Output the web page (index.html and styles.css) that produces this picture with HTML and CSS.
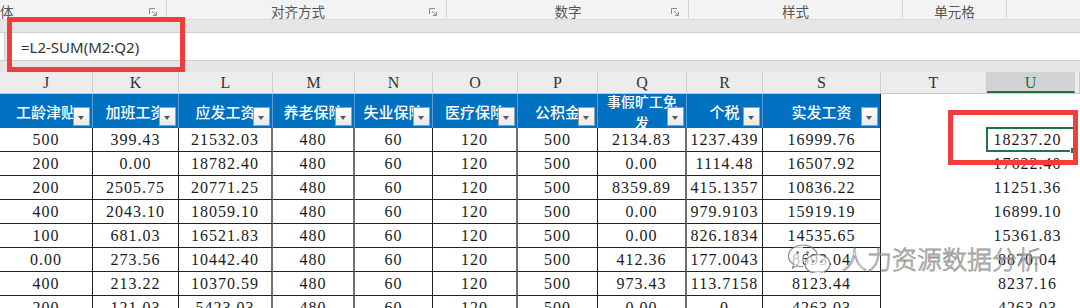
FILE: index.html
```html
<!DOCTYPE html>
<html>
<head>
<meta charset="utf-8">
<link rel="stylesheet" href="styles.css">
</head>
<body>
<div class="ribbon">
  <div class="grp g1"><span class="lbl">体</span><svg class="launch" width="8" height="8" viewBox="0 0 8 8"><path d="M0.5 6V0.5H6" fill="none" stroke="#8a8a8a"/><path d="M3 3L7 7M7.5 4V7.5H4" fill="none" stroke="#8a8a8a"/></svg></div>
  <div class="grp g2"><span class="lbl">对齐方式</span><svg class="launch" width="8" height="8" viewBox="0 0 8 8"><path d="M0.5 6V0.5H6" fill="none" stroke="#8a8a8a"/><path d="M3 3L7 7M7.5 4V7.5H4" fill="none" stroke="#8a8a8a"/></svg></div>
  <div class="grp g3"><span class="lbl">数字</span><svg class="launch" width="8" height="8" viewBox="0 0 8 8"><path d="M0.5 6V0.5H6" fill="none" stroke="#8a8a8a"/><path d="M3 3L7 7M7.5 4V7.5H4" fill="none" stroke="#8a8a8a"/></svg></div>
  <div class="grp g4"><span class="lbl">样式</span></div>
  <div class="grp g5"><span class="lbl">单元格</span></div>
  <div class="grp g6"></div>
</div>
<div class="band"></div>
<div class="fbar"><div class="namebox"></div><div class="fgap"></div><div class="ftext">=L2-SUM(M2:Q2)</div></div>
<div class="band2"></div>

<div class="sheet">
  <div class="row colhdr">
    <div>J</div><div>K</div><div>L</div><div>M</div><div>N</div><div>O</div><div>P</div><div>Q</div><div>R</div><div>S</div><div>T</div><div class="sel">U</div><div></div>
  </div>
  <div class="row thead">
    <div class="h"><span>工龄津贴</span><i class="dd"></i></div>
    <div class="h"><span>加班工资</span><i class="dd"></i></div>
    <div class="h"><span>应发工资</span><i class="dd"></i></div>
    <div class="h"><span>养老保险</span><i class="dd"></i></div>
    <div class="h"><span>失业保险</span><i class="dd"></i></div>
    <div class="h"><span>医疗保险</span><i class="dd"></i></div>
    <div class="h"><span>公积金</span><i class="dd"></i></div>
    <div class="h two"><span>事假旷工免<br>发</span><i class="dd"></i></div>
    <div class="h"><span>个税</span><i class="dd"></i></div>
    <div class="h"><span>实发工资</span><i class="dd"></i></div>
    <div class="e"></div><div class="e"></div><div class="e"></div>
  </div>
  <div class="row data"><div>500</div><div>399.43</div><div>21532.03</div><div>480</div><div>60</div><div>120</div><div>500</div><div>2134.83</div><div>1237.439</div><div>16999.76</div><div></div><div class="u">18237.20</div><div></div></div>
  <div class="row data"><div>200</div><div>0.00</div><div>18782.40</div><div>480</div><div>60</div><div>120</div><div>500</div><div>0.00</div><div>1114.48</div><div>16507.92</div><div></div><div class="u">17622.40</div><div></div></div>
  <div class="row data"><div>200</div><div>2505.75</div><div>20771.25</div><div>480</div><div>60</div><div>120</div><div>500</div><div>8359.89</div><div>415.1357</div><div>10836.22</div><div></div><div class="u">11251.36</div><div></div></div>
  <div class="row data"><div>400</div><div>2043.10</div><div>18059.10</div><div>480</div><div>60</div><div>120</div><div>500</div><div>0.00</div><div>979.9103</div><div>15919.19</div><div></div><div class="u">16899.10</div><div></div></div>
  <div class="row data"><div>100</div><div>681.03</div><div>16521.83</div><div>480</div><div>60</div><div>120</div><div>500</div><div>0.00</div><div>826.1834</div><div>14535.65</div><div></div><div class="u">15361.83</div><div></div></div>
  <div class="row data"><div>0.00</div><div>273.56</div><div>10442.40</div><div>480</div><div>60</div><div>120</div><div>500</div><div>412.36</div><div>177.0043</div><div>8693.04</div><div></div><div class="u">8870.04</div><div></div></div>
  <div class="row data"><div>400</div><div>213.22</div><div>10370.59</div><div>480</div><div>60</div><div>120</div><div>500</div><div>973.43</div><div>113.7158</div><div>8123.44</div><div></div><div class="u">8237.16</div><div></div></div>
  <div class="row data"><div>200</div><div>121.03</div><div>5423.03</div><div>480</div><div>60</div><div>120</div><div>500</div><div>0.00</div><div>0</div><div>4263.03</div><div></div><div class="u">4263.03</div><div></div></div>
</div>

<div class="selbox"><i class="handle"></i></div>
<div class="redbox r1"></div>
<div class="redbox r2"></div>

<div class="watermark">
  <svg class="wx" width="48" height="30" viewBox="0 0 48 30">
    <path d="M17 2C9 2 2.5 7 2.5 13c0 3.4 2 6.3 5 8.3L6.5 25l4.3-2.2c1.9.6 4 .9 6.2.9" fill="rgba(255,255,255,0.7)" stroke="rgba(110,110,110,0.8)" stroke-width="1.2"/>
    <path d="M31.5 11.5c-7 0-12.5 4.3-12.5 9.5s5.5 9.5 12.5 9.5c1.6 0 3.1-.2 4.5-.6l3.6 1.8-.9-3.1c3-1.7 5.3-4.5 5.3-7.6 0-5.2-5.5-9.5-12.5-9.5z" fill="rgba(255,255,255,0.7)" stroke="rgba(110,110,110,0.8)" stroke-width="1.2"/>
    <path d="M17 2c7.5 0 13.5 4.4 14.4 10" fill="none" stroke="rgba(110,110,110,0.8)" stroke-width="1.2"/>
    <circle cx="11.5" cy="9.5" r="1.6" fill="rgba(110,110,110,0.8)"/>
    <circle cx="21.5" cy="9.5" r="1.6" fill="rgba(110,110,110,0.8)"/>
    <circle cx="27" cy="18.5" r="1.3" fill="rgba(110,110,110,0.8)"/>
    <circle cx="35.5" cy="18.5" r="1.3" fill="rgba(110,110,110,0.8)"/>
  </svg>
  <span class="wtext">人力资源数据分析</span>
</div>
</body>
</html>
```
FILE: styles.css
```css
html, body {
  margin: 0;
  padding: 0;
}
body {
  width: 1080px;
  height: 308px;
  overflow: hidden;
  position: relative;
  background: #fff;
  font-family: "Liberation Serif", "Noto Sans CJK SC", serif;
}

/* ribbon group labels */
.ribbon {
  display: flex;
  height: 20px;
  background: #f3f3f3;
  border-bottom: 1px solid #dadada;
  box-sizing: border-box;
  font-family: "Noto Sans CJK SC", "Noto Sans", sans-serif;
  font-size: 13.5px;
  color: #555;
}
.grp {
  display: flex;
  align-items: center;
  height: 18px;
  border-right: 1px solid #d2d2d2;
  box-sizing: border-box;
}
.lbl {
  flex: 1;
  text-align: center;
  line-height: 18px;
  padding-top: 3px;
}
.launch {
  margin-right: 9px;
  margin-top: 6px;
}
.g1 { width: 167px; }
.g1 .lbl { text-align: left; }
.g2 { width: 280px; }
.g3 { width: 242px; }
.g3 .lbl { padding-left: 18px; }
.g4 { width: 214px; }
.g5 { width: 104px; }
.g6 { flex: 1; border-right: none; }

.band {
  height: 12px;
  background: #e6e6e6;
  border-bottom: 1px solid #d0d0d0;
}
.fbar {
  display: flex;
  height: 27px;
  background: #fff;
  border-bottom: 1px solid #d0d0d0;
}
.namebox {
  width: 4px;
  background: #fff;
  border-right: 1px solid #cfcfcf;
}
.fgap {
  width: 3px;
  background: #e6e6e6;
}
.ftext {
  flex: 1;
  padding-left: 13px;
  padding-top: 1px;
  font-family: "Noto Sans", "Open Sans", sans-serif;
  font-size: 15px;
  line-height: 27px;
  color: #333;
}
.band2 {
  height: 11px;
  background: #e6e6e6;
}

/* sheet grid */
.row {
  display: grid;
  grid-template-columns: 93px 86px 94px 82px 78px 85px 80px 89px 76px 118px 106px 88px 5px;
}
.row > div {
  box-sizing: border-box;
  text-align: center;
  overflow: hidden;
}
.colhdr {
  height: 22px;
  background: #ececec;
  border-bottom: 1px solid #c8c8c8;
  box-sizing: border-box;
  font-size: 16px;
  color: #333;
}
.colhdr > div {
  border-right: 1px solid #cdcdcd;
  line-height: 22px;
}
.colhdr > div.sel {
  background: #d3d3d3;
  color: #217346;
  border-bottom: 2px solid #217346;
}

.thead {
  height: 34px;
}
.thead .h {
  position: relative;
  background: #0070c0;
  border-right: 1px solid #5d9bd0;
  color: #fff;
  font-family: "Noto Sans CJK SC", sans-serif;
  font-weight: 500;
  font-size: 15px;
  display: flex;
  align-items: center;
  justify-content: center;
  white-space: nowrap;
}
.thead .h.two {
  font-size: 14px;
  line-height: 21px;
  padding-top: 2px;
}
.thead .h:nth-child(10) { border-right: 1px solid #222; }
.dd {
  position: absolute;
  right: 2px;
  bottom: 2px;
  width: 17px;
  height: 19px;
  box-sizing: border-box;
  background: linear-gradient(#ffffff, #e9e9e9);
  border: 1px solid #9c9c9c;
}
.dd::after {
  content: "";
  position: absolute;
  left: 4px;
  top: 8px;
  border-left: 3.5px solid transparent;
  border-right: 3.5px solid transparent;
  border-top: 4px solid #5a5a5a;
}

.data {
  height: 24px;
  font-size: 16px;
  letter-spacing: 1px;
  color: #1a1a1a;
}
.data > div {
  line-height: 24px;
}
.data > div:nth-child(-n+10) {
  border-right: 1px solid #222;
  border-bottom: 1px solid #222;
}
.data > div:nth-child(3),
.data > div:nth-child(4),
.data > div:nth-child(6),
.data > div:nth-child(8) {
  border-right: 2px solid #707070;
}
.data > div.u {
  padding-right: 7px;
}

/* overlays */
.selbox {
  position: absolute;
  left: 986px;
  top: 127px;
  width: 89px;
  height: 25px;
  box-sizing: border-box;
  border: 2px solid #217346;
}
.handle {
  position: absolute;
  right: -4px;
  bottom: -4px;
  width: 5px;
  height: 5px;
  background: #217346;
  border: 1px solid #fff;
}
.redbox {
  position: absolute;
  box-sizing: border-box;
  border: 5px solid #f23d3d;
}
.r1 { left: 7px; top: 17px; width: 178px; height: 55px; }
.r2 { left: 948px; top: 110px; width: 130px; height: 55px; }

.watermark {
  position: absolute;
  left: 786px;
  top: 243px;
  display: flex;
  align-items: center;
  gap: 8px;
}
.wtext {
  font-family: "Noto Sans CJK SC", sans-serif;
  font-weight: 300;
  font-size: 25px;
  line-height: 30px;
  color: rgba(255, 255, 255, 0.7);
  -webkit-text-stroke: 0.8px rgba(110, 110, 110, 0.75);
}
```
